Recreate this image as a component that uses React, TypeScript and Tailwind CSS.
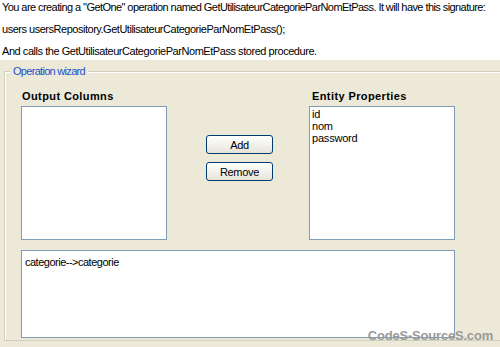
export default function App() {
  return (
    <div className="relative w-[500px] h-[347px] overflow-hidden bg-[#ECE9D8] font-['Liberation_Sans',Arial,sans-serif] text-[11px] text-black">
      {/* intro text */}
      <div className="h-[60px] bg-white px-[2px]">
        <p className="h-[22px] leading-[14px] whitespace-nowrap tracking-[-0.57px]">
          You are creating a "GetOne" operation named GetUtilisateurCategorieParNomEtPass. It will have this signature:
        </p>
        <p className="h-[22px] leading-[14px] whitespace-nowrap tracking-[-0.48px]">
          users usersRepository.GetUtilisateurCategorieParNomEtPass();
        </p>
        <p className="h-[16px] leading-[14px] whitespace-nowrap tracking-[-0.45px]">
          And calls the GetUtilisateurCategorieParNomEtPass stored procedure.
        </p>
      </div>

      <div className="pt-[11px] pl-[4px]">
        <div className="relative w-[520px] h-[270px] border border-[#D0D0BF] shadow-[inset_1px_1px_0_#fff]">
          <span className="absolute -top-[8px] left-[5px] px-[3px] bg-[#ECE9D8] leading-[14px] text-[#1E50C8] tracking-[-0.7px]">
            Operation wizard
          </span>

          <div className="pl-[16px] pt-[17px]">
            <div className="flex">
              <div className="w-[146px]">
                <div className="h-[17px] pl-[1px] font-bold leading-[14px] tracking-[0.4px]">Output Columns</div>
                <div className="h-[134px] border border-[#7F9DB9] bg-white" />
              </div>

              <div className="w-[142px] pl-[39px] pt-[46px] flex flex-col gap-[8px]">
                <button className="w-[67px] h-[19px] rounded-[3px] border border-[#003C74] bg-gradient-to-b from-white to-[#E6E4DA] leading-[16px] text-[11px] tracking-[-0.3px]">
                  Add
                </button>
                <button className="w-[67px] h-[19px] rounded-[3px] border border-[#003C74] bg-gradient-to-b from-white to-[#E6E4DA] leading-[16px] text-[11px] tracking-[-0.3px]">
                  Remove
                </button>
              </div>

              <div className="w-[146px]">
                <div className="h-[17px] pl-[3px] font-bold leading-[14px] tracking-[0.4px]">Entity Properties</div>
                <div className="h-[134px] border border-[#7F9DB9] bg-white px-[2px] pt-[1px] leading-[12px] tracking-[-0.2px]">
                  <div>id</div>
                  <div>nom</div>
                  <div>password</div>
                </div>
              </div>
            </div>

            <div className="mt-[10px] w-[434px] h-[88px] border border-[#7F9DB9] bg-white px-[3px] pt-[5px] leading-[12px] tracking-[-0.5px]">
              categorie--&gt;categorie
            </div>
          </div>
        </div>
      </div>

      {/* watermark */}
      <span className="absolute right-[7px] bottom-[3px] font-bold text-[13px] leading-[16px] text-[#9A9A9A] tracking-[-0.2px]">
        CodeS-SourceS.com
      </span>
    </div>
  );
}
